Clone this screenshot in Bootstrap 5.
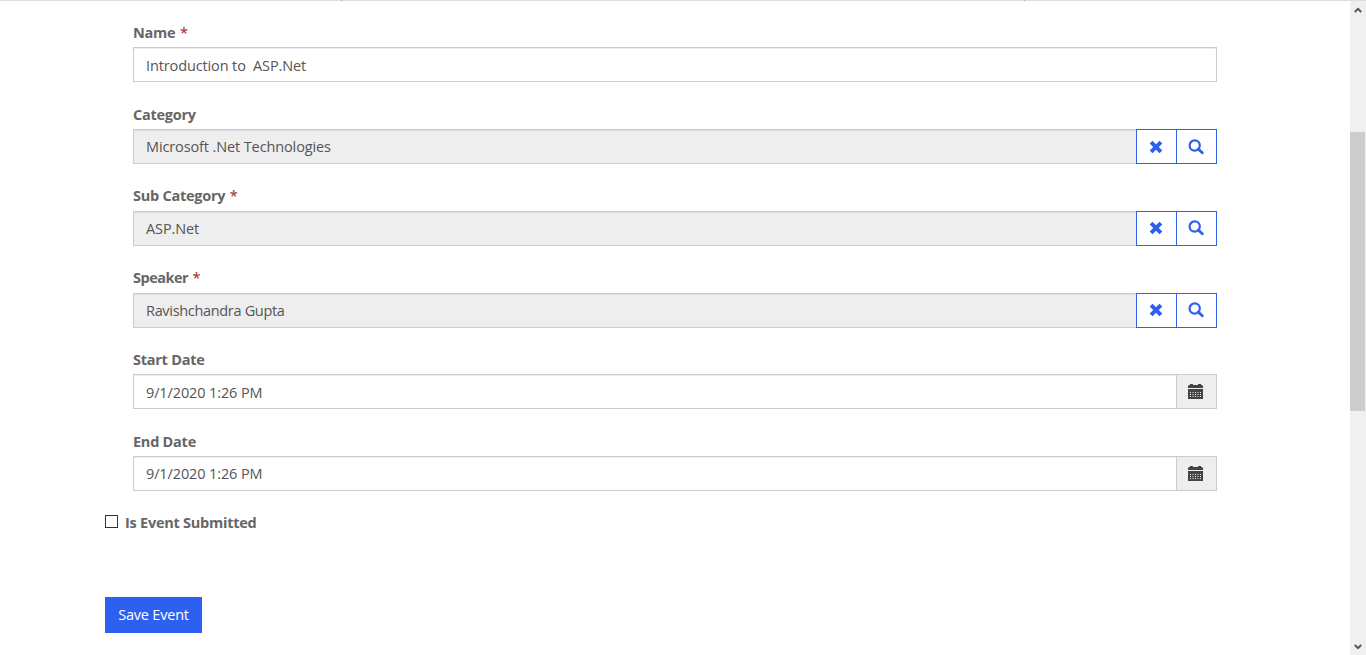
<!DOCTYPE html>
<html lang="en">
<head>
    <meta charset="UTF-8">
    <meta name="viewport" content="width=device-width, initial-scale=1.0">
    <title>Event</title>
    <!-- Bootstrap CSS -->
    <link href="https://cdn.jsdelivr.net/npm/bootstrap@5.3.3/dist/css/bootstrap.min.css" rel="stylesheet">
    <style>
        body {
            height: 655px;
            font-family: "Open Sans", "Noto Sans", sans-serif;
            font-size: 14.5px;
            line-height: 21px;
            letter-spacing: -0.12px;
            color: #555;
        }
        .top-line {
            height: 1px;
            background-color: #ddd;
        }
        .top-line span {
            border-right: 1px solid #aaa;
        }
        .tick-first {
            width: 342px;
        }
        .tick-second {
            width: 683px;
        }
        .event-form {
            width: 1112px;
            margin-left: 105px;
            padding-top: 20.75px;
        }
        .field {
            height: 81.8px;
            margin-left: 28px;
        }
        .field label {
            display: block;
            height: 25.5px;
        }
        .field label, .check-row label {
            font-weight: 700;
            color: #666;
            letter-spacing: -0.25px;
        }
        .field .label-tight {
            letter-spacing: -0.5px;
        }
        .required {
            margin-left: 1px;
            font-weight: 600;
            color: #b03c3f;
        }
        .field .form-control {
            height: 35px;
            padding: 2px 12px 0;
            border: 1px solid #ccc;
            border-radius: 0;
            box-shadow: inset 0 1px 1px rgba(0,0,0,0.075);
            font-size: 14.5px;
            letter-spacing: inherit;
            color: #555;
        }
        .field .form-control[readonly] {
            padding-top: 0;
            background-color: #eee;
        }
        .field #speaker {
            letter-spacing: -0.32px;
        }
        .field #endDate {
            padding-top: 0;
        }
        .field .btn, .input-group-text {
            width: 41px;
            height: 35px;
            padding: 0 2px 0 0;
            border-radius: 0;
            display: flex;
            align-items: center;
            justify-content: center;
        }
        .field .btn {
            border: 1px solid #2e60e8;
            color: #2e60f0;
            background-color: #fff;
        }
        .input-group-text {
            border: 1px solid #ccc;
            background-color: #eee;
            color: #444;
        }
        .check-row {
            margin-top: -1px;
        }
        .check-row input {
            appearance: none;
            width: 13px;
            height: 13px;
            margin: -2px 7px 0 0;
            border: 1px solid #333;
        }
        .btn-save {
            width: 97px;
            height: 36px;
            margin-top: 64px;
            padding: 0;
            border: 0;
            border-radius: 0;
            background-color: #2e60f0;
            color: #fff;
            font-size: 14.5px;
            letter-spacing: -0.2px;
        }
        .scroll-track {
            width: 16px;
            background-color: #f0f0f0;
        }
        .scroll-track svg {
            display: block;
            margin-left: 4px;
        }
        .scroll-thumb {
            width: 15px;
            height: 279px;
            margin-top: 117px;
            background-color: #cdcdcd;
        }
    </style>
</head>
<body class="d-flex flex-column overflow-hidden">
<svg class="d-none">
    <symbol id="icon-remove" viewBox="0 0 14 14">
        <path d="M3.5 .7 7 4.2 10.5 .7 13.3 3.5 9.8 7 13.3 10.5 10.5 13.3 7 9.8 3.5 13.3 .7 10.5 4.2 7 .7 3.5Z" fill="currentColor"/>
    </symbol>
    <symbol id="icon-search" viewBox="0 0 16 16">
        <circle cx="6.7" cy="6.5" r="5.1" fill="none" stroke="currentColor" stroke-width="2.2"/>
        <path d="M10.2 10 14.3 13.8" fill="none" stroke="currentColor" stroke-width="2.8" stroke-linecap="round"/>
    </symbol>
    <symbol id="icon-calendar" viewBox="0 0 15 15">
        <path d="M2 0h3v1h5V0h3v1h1l1 1v2H0V2l1-1h1zM0 5h15v10H0z" fill="currentColor"/>
        <path d="M2 8.5h11M2 10.5h11M2 12.5h11" stroke="#eee" stroke-width="1" stroke-dasharray="1 1.5"/>
    </symbol>
</svg>

<div class="top-line d-flex">
    <span class="tick-first"></span>
    <span class="tick-second"></span>
</div>
<div class="d-flex flex-grow-1">
    <main class="flex-grow-1">
        <form class="event-form">
            <div class="field">
                <label for="name">Name <span class="required">*</span></label>
                <input type="text" class="form-control" id="name" value="Introduction to  ASP.Net">
            </div>
            <div class="field">
                <label for="category">Category</label>
                <div class="input-group">
                    <input type="text" class="form-control" id="category" value="Microsoft .Net Technologies" readonly>
                    <button type="button" class="btn" aria-label="Clear"><svg width="14" height="14"><use href="#icon-remove"/></svg></button>
                    <button type="button" class="btn" aria-label="Search"><svg width="16" height="16"><use href="#icon-search"/></svg></button>
                </div>
            </div>
            <div class="field">
                <label for="subCategory">Sub Category <span class="required">*</span></label>
                <div class="input-group">
                    <input type="text" class="form-control" id="subCategory" value="ASP.Net" readonly>
                    <button type="button" class="btn" aria-label="Clear"><svg width="14" height="14"><use href="#icon-remove"/></svg></button>
                    <button type="button" class="btn" aria-label="Search"><svg width="16" height="16"><use href="#icon-search"/></svg></button>
                </div>
            </div>
            <div class="field">
                <label for="speaker" class="label-tight">Speaker <span class="required">*</span></label>
                <div class="input-group">
                    <input type="text" class="form-control" id="speaker" value="Ravishchandra Gupta" readonly>
                    <button type="button" class="btn" aria-label="Clear"><svg width="14" height="14"><use href="#icon-remove"/></svg></button>
                    <button type="button" class="btn" aria-label="Search"><svg width="16" height="16"><use href="#icon-search"/></svg></button>
                </div>
            </div>
            <div class="field">
                <label for="startDate">Start Date</label>
                <div class="input-group">
                    <input type="text" class="form-control" id="startDate" value="9/1/2020 1:26 PM">
                    <span class="input-group-text"><svg width="15" height="15"><use href="#icon-calendar"/></svg></span>
                </div>
            </div>
            <div class="field">
                <label for="endDate">End Date</label>
                <div class="input-group">
                    <input type="text" class="form-control" id="endDate" value="9/1/2020 1:26 PM">
                    <span class="input-group-text"><svg width="15" height="15"><use href="#icon-calendar"/></svg></span>
                </div>
            </div>
            <div class="check-row d-flex align-items-center">
                <input type="checkbox" id="isSubmitted">
                <label for="isSubmitted">Is Event Submitted</label>
            </div>
            <button type="button" class="btn btn-save">Save Event</button>
        </form>
    </main>
    <div class="scroll-track d-flex flex-column">
        <svg width="8" height="14"><path d="M.8 11 4 7.8 7.2 11" fill="none" stroke="#555" stroke-width="2"/></svg>
        <div class="scroll-thumb"></div>
        <svg class="mt-auto" width="8" height="14"><path d="M.8 4 4 7.2 7.2 4" fill="none" stroke="#555" stroke-width="2"/></svg>
    </div>
</div>

<!-- Bootstrap JS -->
<script src="https://cdn.jsdelivr.net/npm/bootstrap@5.3.3/dist/js/bootstrap.bundle.min.js"></script>
</body>
</html>
